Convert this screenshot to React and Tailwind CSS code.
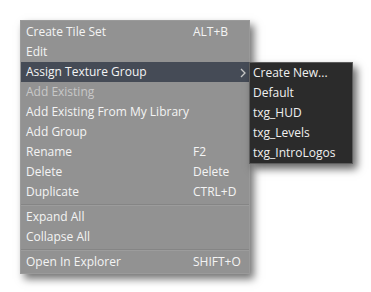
import React from "react";

const font = { fontFamily: '"Open Sans", "Noto Sans", sans-serif' };

function Row({ label, shortcut, disabled, active, arrow }) {
  return (
    <div
      className={`relative flex h-[20px] items-center pl-[5px] text-[12px] leading-none ${
        active ? "bg-[#454b56]" : ""
      } ${disabled ? "text-[#c8c8c8]" : "text-[#f4f4f4]"}`}
    >
      <span className="w-[167px] shrink-0 whitespace-nowrap">{label}</span>
      {shortcut && <span className="whitespace-nowrap">{shortcut}</span>}
      {arrow && (
        <svg
          className="absolute left-[219px] top-[6px]"
          width="6"
          height="10"
          viewBox="0 0 6 10"
        >
          <path d="M1 1 L5 5 L1 9" fill="none" stroke="#c8c8c8" strokeWidth="1.3" />
        </svg>
      )}
    </div>
  );
}

function Sep({ h }) {
  return (
    <div className={`flex ${h} flex-col justify-center`}>
      <div className="h-px bg-[#858585]" />
      <div className="h-px bg-[#9c9c9c]" />
    </div>
  );
}

export default function App() {
  return (
    <div className="h-[292px] w-[371px] bg-white pl-[20px] pt-[20px]" style={font}>
      <div className="relative w-[230px] border border-[#9a9a9a] bg-[#929292] pt-[1px] pb-[1px] shadow-[4px_5px_8px_rgba(0,0,0,0.55)]">
        <Row label="Create Tile Set" shortcut="ALT+B" />
        <Row label="Edit" />
        <Row label="Assign Texture Group" active arrow />
        <Row label="Add Existing" disabled />
        <Row label="Add Existing From My Library" />
        <Row label="Add Group" />
        <Row label="Rename" shortcut="F2" />
        <Row label="Delete" shortcut="Delete" />
        <Row label="Duplicate" shortcut="CTRL+D" />
        <Sep h="h-[5px]" />
        <Row label="Expand All" />
        <Row label="Collapse All" />
        <Sep h="h-[5px]" />
        <Row label="Open In Explorer" shortcut="SHIFT+O" />

        <div className="absolute left-[228px] top-[41px] w-[104px] border border-[#5c5c5c] bg-[#2b2b2b] shadow-[4px_5px_8px_rgba(0,0,0,0.6)]">
          {["Create New...", "Default", "txg_HUD", "txg_Levels", "txg_IntroLogos"].map((t) => (
            <div
              key={t}
              className="flex h-[20px] items-center pl-[3px] text-[12px] leading-none text-[#f0f0f0] whitespace-nowrap"
            >
              {t}
            </div>
          ))}
        </div>
      </div>
    </div>
  );
}
